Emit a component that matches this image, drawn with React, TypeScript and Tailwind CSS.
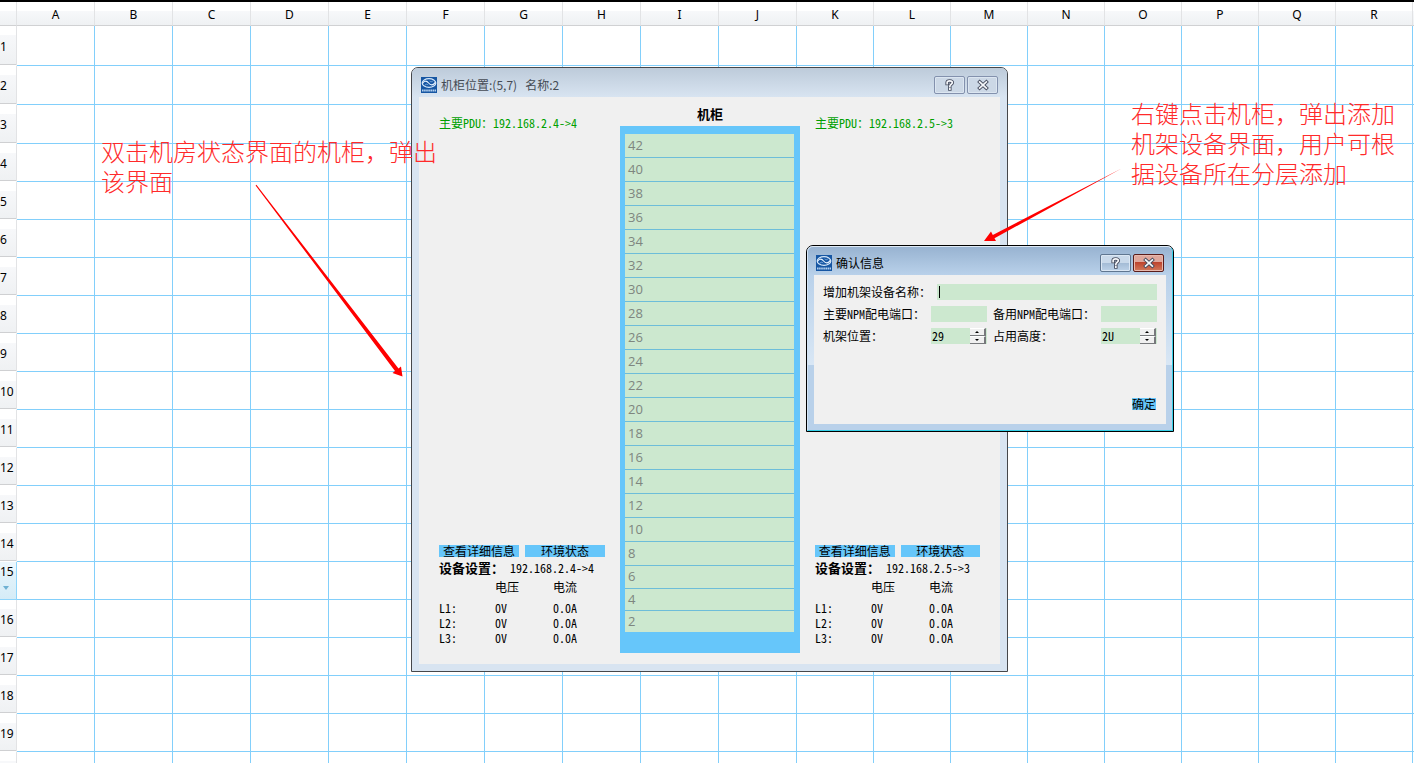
import React, { useState } from "react";

const columns = ["A", "B", "C", "D", "E", "F", "G", "H", "I", "J", "K", "L", "M", "N", "O", "P", "Q", "R"];
const rows = Array.from({ length: 19 }, (_, i) => i + 1);
const rackUnits = Array.from({ length: 21 }, (_, i) => 42 - i * 2);

const pixelFont = "font-['Noto_Sans_Mono_CJK_SC','Noto_Sans_CJK_SC',monospace]";

function rowHeight(n: number) {
  if (n === 1) return "h-[40px]";
  return n <= 3 ? "h-[39px]" : "h-[38px]";
}

function rackRow(n: number) {
  if (n === 2) return "h-[21px]";
  if (n === 4) return "h-[22px] border-b";
  return n === 6 ? "h-[23px] border-b" : "h-[24px] border-b";
}

function Sheet() {
  return (
    <table className="w-full table-fixed border-separate border-spacing-0 font-['Noto_Sans',sans-serif] text-[12px] text-black">
      <colgroup>
        <col className="w-[17px]" />
        {columns.map((c, i) => (
          <col key={c} className={i < 10 ? "w-[78px]" : "w-[77px]"} />
        ))}
        <col />
      </colgroup>
      <thead>
        <tr className="h-[24px]">
          {["", ...columns, ""].map((c, i) => (
            <th
              key={i}
              scope="col"
              className="border-r border-b border-r-[#e2e3e5] border-b-[#d0d1d3] bg-[linear-gradient(#fff_9px,#f7f8fa_9px,#eff1f3)] p-0 pt-[2px] font-normal leading-4 last:border-r-0"
            >
              {c}
            </th>
          ))}
        </tr>
      </thead>
      <tbody>
        {rows.map((n) => (
          <tr key={n} className={rowHeight(n)}>
            {n === 15 ? (
              <th
                scope="row"
                className="border-r border-b border-[#8fd5fb] bg-[linear-gradient(#ecf7fd_9px,#e3f3fb_9px,#d5ecf7)] p-0 text-left align-top font-normal leading-5"
              >
                <span className="block">15</span>
                <svg width="6" height="4" viewBox="0 0 6 4" className="mt-[4px] ml-[3px] block" aria-hidden="true">
                  <path d="M0 0h6L3 4z" fill="#6fb1d3" />
                </svg>
              </th>
            ) : (
              <th
                scope="row"
                className="border-r border-b border-r-[#e2e3e5] border-b-white bg-[linear-gradient(#fff_9px,#f7f8fa_9px,#eff1f3_calc(100%-1px),#cfd0d2_calc(100%-1px))] p-0 pt-[2px] text-left font-normal leading-4"
              >
                {n}
              </th>
            )}
            {[...columns, ""].map((c, i) => (
              <td key={i} className="border-r border-b border-[#82cffb] bg-white p-0 last:border-r-0" />
            ))}
          </tr>
        ))}
        <tr className="h-[38px]">
          <th scope="row" className="border-r border-r-[#e2e3e5] bg-[linear-gradient(#fff_9px,#f7f8fa_9px)] p-0" />
          {[...columns, ""].map((c, i) => (
            <td key={i} className="border-r border-[#82cffb] bg-white p-0 last:border-r-0" />
          ))}
        </tr>
      </tbody>
    </table>
  );
}

function Logo() {
  return (
    <svg width="16" height="16" viewBox="0 0 16 16" className="shrink-0" aria-hidden="true">
      <rect width="16" height="16" fill="#1656a3" />
      <ellipse cx="8" cy="6" rx="6.800" ry="4.400" fill="none" stroke="#d6e8fa" strokeWidth="1.200" />
      <path d="M1.500 6.400C3 3.600 5.600 3.400 7.600 6s4.800 2.600 6.700-.6" fill="none" stroke="#e8f3ff" strokeWidth="1.100" />
      <path d="M4 8.200c1-1.200 2-1.200 3.200-.2M8.600 4c1.200 1 2.200 1 3.200 0" fill="none" stroke="#8fb9e6" strokeWidth=".8" />
      <path d="M1 13.500h14" stroke="#b4d0ee" strokeWidth="2.200" strokeDasharray="1.600 .5" />
    </svg>
  );
}

const helpPath = "M3 4.200V3.200C3 1.900 4 1.600 5.500 1.600S8 2.200 8 3.400C8 4.800 5.600 4.800 5.600 6.600M5.600 8.800v.6";
const closePath = "M2.500 2.500l6.500 6M9 2.500l-6.500 6";

function Glyph({ d }: { d: string }) {
  return (
    <svg width="12" height="12" viewBox="0 0 11.500 11" aria-hidden="true" fill="none" strokeLinecap="square">
      <path d={d} stroke="#464c5e" strokeWidth="3.300" />
      <path d={d} stroke="#f6f8fb" strokeWidth="1.600" />
    </svg>
  );
}

function TitleBar({ title, active, className }: { title: string; active?: boolean; className: string }) {
  const base = "flex h-[18px] w-[31px] items-center justify-center rounded-[2px] border";
  const plain = active
    ? "border-[#5f7690] bg-[linear-gradient(#c9d9ea_50%,#a3bbd5_50%,#bdd2e8)] shadow-[inset_0_0_0_1px_#dbe7f4]"
    : "border-[#8391ad] bg-[#ccd8e6] shadow-[inset_0_0_0_1px_#dce6f1]";
  const close = active
    ? "border-[#5a1d1b] bg-[linear-gradient(#dfa79c_45%,#bd432d_45%,#d27a5c)] shadow-[inset_0_0_0_1px_#e8b9ae]"
    : plain;
  return (
    <header className={className}>
      <Logo />
      <h2 className="ml-1 flex-1 whitespace-pre font-['Noto_Sans_CJK_SC',sans-serif] text-[12px] leading-4">{title}</h2>
      <button type="button" aria-label="帮助" className={`${base} ${plain}`}>
        <Glyph d={helpPath} />
      </button>
      <button type="button" aria-label="关闭" className={`${base} ${close} ml-[2px]`}>
        <Glyph d={closePath} />
      </button>
    </header>
  );
}

function PduPanel({ address }: { address: string }) {
  const action = "flex h-[12px] flex-1 items-center justify-center whitespace-nowrap bg-[#66c6fa] leading-3";
  return (
    <section className="flex flex-col pt-[9px] pb-[8px]">
      <p className="whitespace-nowrap leading-4 text-[#00a000]">主要PDU：{address}</p>
      <div className="mt-auto flex gap-[6px]">
        <button type="button" className={action}>查看详细信息</button>
        <button type="button" className={action}>环境状态</button>
      </div>
      <p className="mt-px flex items-center whitespace-nowrap leading-5">
        <strong className="w-[71px] text-[13px]">设备设置：</strong>
        {address}
      </p>
      <table className="w-full table-fixed text-left leading-[15px]">
        <thead>
          <tr className="h-[22px]">
            <td className="w-[56px] p-0" />
            <th scope="col" className="w-[58px] p-0 pb-[6px] font-normal">电压</th>
            <th scope="col" className="p-0 pb-[6px] font-normal">电流</th>
          </tr>
        </thead>
        <tbody>
          {["L1:", "L2:", "L3:"].map((line) => (
            <tr key={line}>
              <th scope="row" className="p-0 font-normal">{line}</th>
              <td className="p-0">0V</td>
              <td className="p-0">0.0A</td>
            </tr>
          ))}
        </tbody>
      </table>
    </section>
  );
}

function CabinetWindow() {
  return (
    <section className="absolute top-[67px] left-[411px] w-[597px] rounded-t-[7px] border border-[#45474b] bg-[#d8e4f1] px-[7px] pb-[7px]">
      <TitleBar
        title="机柜位置:(5,7)   名称:2"
        className="-mx-[7px] flex h-[29px] items-center rounded-t-[6px] bg-linear-to-b from-[#bdcbda] to-[#d8e4f1] pt-[5px] pr-[9px] pl-[9px] text-[#454b54]"
      />
      <div className={`grid grid-cols-[166px_180px_1fr] gap-x-[15px] bg-[#f0f0f0] px-5 pt-[9px] pb-[11px] text-[12px] text-black ${pixelFont}`}>
        <PduPanel address="192.168.2.4->4" />
        <section>
          <h3 className="mb-1 text-center text-[13px] leading-4 font-bold">机柜</h3>
          <ol className="bg-[#66c6fa] pt-[8px] pr-[6px] pb-[21px] pl-[5px] font-['Open_Sans',sans-serif] text-[13px] text-[#7e867f]">
            {rackUnits.map((n) => (
              <li key={n} className={`${rackRow(n)} flex items-center border-[#6dbdd9] bg-[#cce8cf] pb-[2px] pl-[3px] leading-4`}>
                {n}
              </li>
            ))}
          </ol>
        </section>
        <PduPanel address="192.168.2.5->3" />
      </div>
    </section>
  );
}

function SpinField({ id, initial, suffix }: { id: string; initial: number; suffix: string }) {
  const [value, setValue] = useState(initial);
  const step =
    "flex h-[8px] w-[16px] items-center justify-center border-t border-r-2 border-b border-t-white border-r-[#77797c] border-b-[#77797c] bg-[#f0f0f0]";
  return (
    <div className="flex h-[16px] bg-[#cce8cf] pr-px">
      <input
        id={id}
        value={`${value}${suffix}`}
        onChange={(e) => setValue(parseInt(e.target.value, 10) || 0)}
        className="min-w-0 flex-1 bg-transparent pl-[1px] leading-4 outline-none"
      />
      <span className="flex flex-col">
        <button type="button" aria-label="增加" className={step} onClick={() => setValue(value + 1)}>
          <svg width="4" height="2" viewBox="0 0 4 2" aria-hidden="true"><path d="M2 0L4 2H0z" /></svg>
        </button>
        <button type="button" aria-label="减少" className={step} onClick={() => setValue(value - 1)}>
          <svg width="4" height="2" viewBox="0 0 4 2" aria-hidden="true"><path d="M2 2L4 0H0z" /></svg>
        </button>
      </span>
    </div>
  );
}

function ConfirmWindow() {
  const field = "h-[16px] w-full min-w-0 bg-[#cce8cf] px-1 leading-4 outline-none";
  return (
    <section className="absolute top-[245px] left-[806px] w-[368px] rounded-t-[7px] border border-black bg-[#b9d1ea]">
      <div className="rounded-t-[6px] border border-t-[#dfeaf5] border-r-[#35d0e8] border-b-[#35d0e8] border-l-[#d5e5f5] bg-[linear-gradient(#b9d1ea_28px,#d9e7f5_118px,#b9d1ea_118px)] px-[6px] pb-[6px]">
        <TitleBar
          active
          title="确认信息"
          className="-mx-[6px] flex h-[28px] items-center rounded-t-[5px] bg-linear-to-b from-[#98b3d1] to-[#b9d1ea] pt-[4px] pr-[8px] pl-[8px] text-black"
        />
        <form
          className={`flex min-h-[149px] flex-col gap-[6px] bg-[#f0f0f0] px-[9px] pt-[9px] pb-[14px] text-[12px] leading-4 text-black ${pixelFont}`}
          onSubmit={(e) => e.preventDefault()}
        >
          <div className="grid grid-cols-[114px_1fr]">
            <label htmlFor="device" className="whitespace-nowrap">增加机架设备名称：</label>
            <div className="relative">
              <input id="device" className={field} />
              <span className="absolute top-[2px] left-[2px] h-[12px] w-px bg-black" />
            </div>
          </div>
          <div className="grid grid-cols-[108px_56px_1fr_56px] gap-y-[6px] whitespace-nowrap">
            <label htmlFor="mainPort">主要NPM配电端口：</label>
            <input id="mainPort" className={field} />
            <label htmlFor="sparePort" className="pl-[6px]">备用NPM配电端口：</label>
            <input id="sparePort" className={field} />
            <label htmlFor="position">机架位置：</label>
            <SpinField id="position" initial={29} suffix="" />
            <label htmlFor="units" className="pl-[6px]">占用高度：</label>
            <SpinField id="units" initial={2} suffix="U" />
          </div>
          <button type="submit" className="mt-auto mr-px flex h-[12px] items-center self-end bg-[#66c6fa] leading-3">
            确定
          </button>
        </form>
      </div>
    </section>
  );
}

export default function App() {
  const note = "absolute font-['Noto_Sans_CJK_SC',sans-serif] text-[24px] leading-[30px] font-light text-[#ff2a2a]";
  return (
    <main className="relative h-screen overflow-hidden border-t-2 border-black bg-white">
      <Sheet />
      <div className="absolute -top-[2px] left-0">
        <CabinetWindow />
        <ConfirmWindow />
        <svg width="1180" height="400" viewBox="0 0 1180 400" className="pointer-events-none absolute top-0 left-0 max-w-none" aria-hidden="true">
          <path d="M255.600 185.400L256.400 184.800L398.500 368.500L401 366.500L402.500 376.500L392.500 373L395 371Z" fill="#ff0000" />
          <path d="M1122 168.300L994.500 238.200L996 241L984 241L991 231.500L992.800 235Z" fill="#ff0000" />
        </svg>
        <p className={`${note} top-[136px] left-[101px] w-[340px]`}>双击机房状态界面的机柜，弹出该界面</p>
        <p className={`${note} top-[98px] left-[1131px] w-[270px]`}>右键点击机柜，弹出添加机架设备界面，用户可根据设备所在分层添加</p>
      </div>
    </main>
  );
}
